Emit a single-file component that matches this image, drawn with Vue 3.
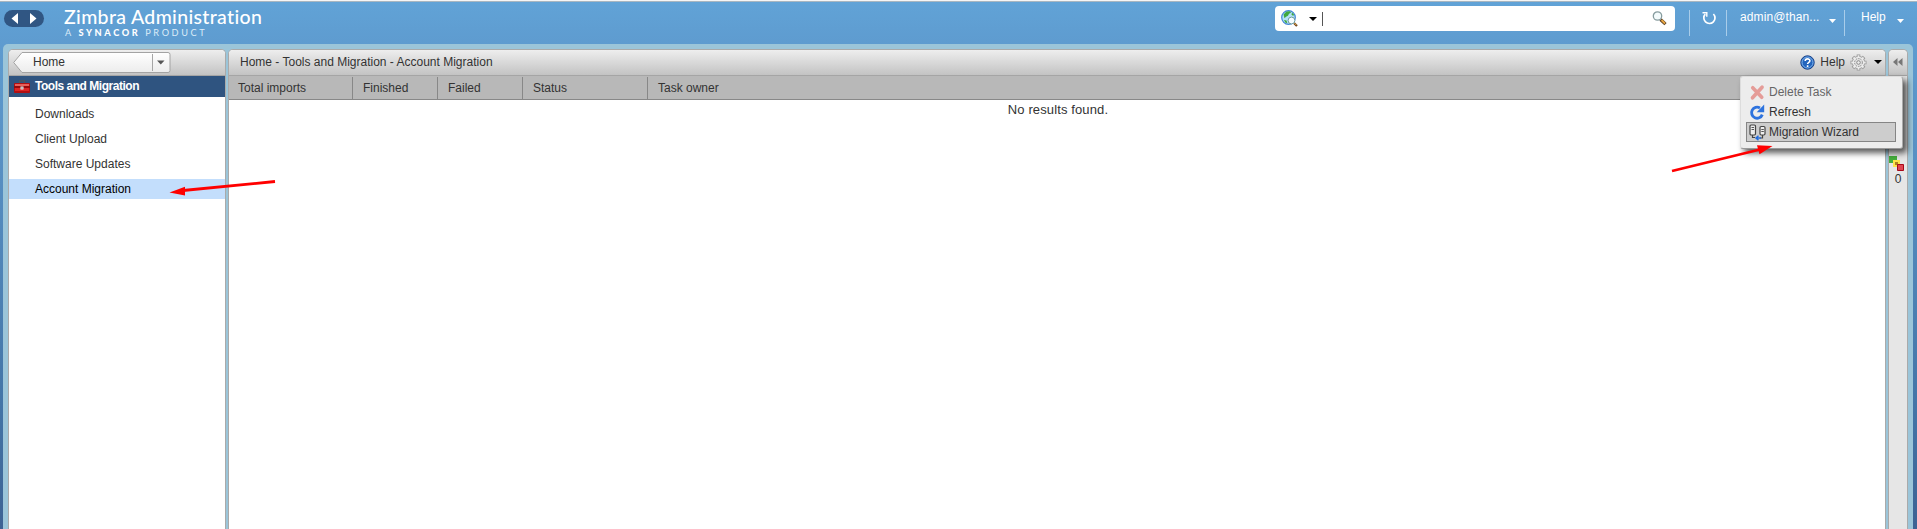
<script setup>
import { ref } from 'vue'

const navItems = ['Downloads', 'Client Upload', 'Software Updates', 'Account Migration']
const selected = ref('Account Migration')
const columns = [
  { label: 'Total imports', width: 124 },
  { label: 'Finished', width: 85 },
  { label: 'Failed', width: 85 },
  { label: 'Status', width: 125 },
  { label: 'Task owner', width: 0 },
]
</script>

<template>
  <div class="page">
    <header class="top">
      <div class="history">
        <svg width="40" height="17" viewBox="0 0 40 17">
          <path d="M14 3v11L7.500 8.500zM26 3v11l6.500-5.500z" fill="#fff" />
        </svg>
      </div>
      <div class="brand">
        <div class="name">Zimbra Administration</div>
        <div class="tag">A <b>SYNACOR</b> PRODUCT</div>
      </div>
      <div class="search">
        <svg class="globe" width="17" height="17" viewBox="0 0 17 17">
          <circle cx="7.500" cy="7.500" r="6.800" fill="#b4e1f6" stroke="#4386d6" stroke-width="1.200" />
          <path d="M2.500 4.500l3-3 3.500-.3 1 1.600-2 1-1 2-2 1-1.500 1.500zM11 2.500l2.300 2.500-1.300.8-1.500-1zM3 10l2.500.5.8 2.800-2-.8z" fill="#3fa83d" />
          <path d="M13 13l3 3" stroke="#6b431c" stroke-width="2.200" />
          <path d="M13.500 13.200l2 2" stroke="#f5b451" stroke-width="1" />
          <circle cx="10.500" cy="10.500" r="3.400" fill="#f7fdff" stroke="#5f9296" stroke-width=".9" />
        </svg>
        <svg class="caret" width="8" height="4" viewBox="0 0 8 4"><path d="M0 0h8L4 4z" fill="#000" /></svg>
        <i class="cursor"></i>
        <svg class="lens" width="15" height="15" viewBox="0 0 15 15">
          <path d="M8.500 8.500l5 4.700" stroke="#5a4027" stroke-width="3.200" />
          <path d="M9.500 9l3.500 3.500" stroke="#e8a642" stroke-width="1.800" />
          <circle cx="5.500" cy="5" r="4.200" fill="#f4fbfc" stroke="#879c9f" stroke-width="1.300" />
        </svg>
      </div>
      <div class="sep s1"></div>
      <svg class="reload" width="15" height="15" viewBox="0 0 15 15">
        <path d="M3.300 3.100A5.600 5.600 0 1 0 11.400 3" fill="none" stroke="#fff" stroke-width="1.700" />
        <path d="M.5 1.800h4.300v4" fill="none" stroke="#fff" stroke-width="1.400" />
      </svg>
      <div class="sep s2"></div>
      <span class="user">admin@than...</span>
      <svg class="tri" width="7" height="4" viewBox="0 0 7 4"><path d="M0 0h7L3.500 4z" fill="#fff" /></svg>
      <div class="sep s3"></div>
      <span class="tophelp">Help</span>
      <svg class="tri" width="7" height="4" viewBox="0 0 7 4"><path d="M0 0h7L3.500 4z" fill="#fff" /></svg>
    </header>

    <div class="shell">
      <aside class="panel side">
        <div class="bar">
          <div class="crumb">
            <svg width="158" height="21" viewBox="0 0 158 21">
              <defs>
                <linearGradient id="crumbFill" x1="0" y1="0" x2="0" y2="1">
                  <stop offset="0" stop-color="#fff" /><stop offset="1" stop-color="#ececec" />
                </linearGradient>
              </defs>
              <path d="M9 .5h146a2 2 0 0 1 2 2v16a2 2 0 0 1-2 2H9L.7 10.500z" fill="url(#crumbFill)" stroke="#a3a3a3" />
              <path d="M139.500 2v17" stroke="#a5a5a5" />
              <path d="M144 8.500h7.500l-3.750 4z" fill="#555" />
            </svg>
            <span>Home</span>
          </div>
        </div>
        <div class="section">
          <svg width="16" height="13" viewBox="0 0 16 13">
            <path d="M5.500 3V.8h5V3" fill="none" stroke="#555" stroke-width="1.300" />
            <rect y="3" width="16" height="10" rx="1" fill="#b30f12" />
            <path d="M1 4h14v2H1z" fill="#e8605a" />
            <path d="M1 8h14v3H1z" fill="#dc2524" />
            <path d="M0 7h16" stroke="#770608" />
            <rect x="6.500" y="6.500" width="3" height="3" fill="#eee" />
            <rect x="7.500" y="7.500" width="1" height="1" fill="#444" />
          </svg>
          <span>Tools and Migration</span>
        </div>
        <nav>
          <div
            v-for="item in navItems"
            :key="item"
            class="item"
            :class="{ on: item === selected }"
            @click="selected = item"
          >{{ item }}</div>
        </nav>
      </aside>

      <main class="panel content">
        <div class="bar mainbar">
          <span class="path">Home - Tools and Migration - Account Migration</span>
          <svg class="q" width="15" height="15" viewBox="0 0 15 15">
            <circle cx="7.500" cy="7.500" r="6.700" fill="#2465bd" stroke="#173f86" />
            <circle cx="7.500" cy="7.500" r="5.500" fill="none" stroke="#80b5ed" />
            <path d="M5.200 6.100c0-3 4.700-2.800 4.700-.3 0 1.600-2.300 1.600-2.300 3.300M7.600 10.200v1.700" fill="none" stroke="#fff" stroke-width="1.600" />
          </svg>
          <span class="helptext">Help</span>
          <svg class="gear" width="17" height="17" viewBox="0 0 17 17">
            <g stroke="#999" stroke-width="3.600">
              <path d="M8.500.5v16M.5 8.500h16M2.900 2.900l11.200 11.200M14.100 2.900L2.900 14.100" />
            </g>
            <circle cx="8.500" cy="8.500" r="6.200" fill="#e9e9e9" stroke="#999" stroke-width=".9" />
            <g stroke="#ececec" stroke-width="1.800">
              <path d="M8.500 1.300v14.400M1.300 8.500h14.400M3.500 3.500l10 10M13.500 3.500l-10 10" />
            </g>
            <circle cx="8.500" cy="8.500" r="3.900" fill="#e4e4e4" stroke="#888" stroke-dasharray="1.500 1" />
            <circle cx="8.500" cy="8.500" r="1.800" fill="#ededed" stroke="#888" />
          </svg>
          <svg class="drop" width="8" height="4" viewBox="0 0 8 4"><path d="M0 0h8L4 4z" fill="#000" /></svg>
        </div>
        <div class="thead">
          <div
            v-for="c in columns"
            :key="c.label"
            class="th"
            :style="c.width ? { width: c.width + 'px' } : { flex: 1 }"
          >{{ c.label }}</div>
        </div>
        <div class="empty">No results found.</div>
      </main>

      <aside class="panel strip">
        <div class="bar collapse">
          <svg width="10" height="8" viewBox="0 0 10 8"><path d="M4.500 0v8L0 4zM9.500 0v8L5 4z" fill="#777" /></svg>
        </div>
        <div class="status">
          <svg width="16" height="16" viewBox="0 0 16 16">
            <path d="M0 0h8v7H0z" fill="#45ae3d" />
            <path d="M5 5h5v5H5z" fill="#ad8120" stroke="#ffe34b" stroke-width="2" />
            <path d="M8.500 8.500h6v6h-6z" fill="#df4552" stroke="#a80718" />
          </svg>
          <span>0</span>
        </div>
      </aside>
    </div>

    <div class="menu">
      <div class="mi off">
        <svg width="16" height="16" viewBox="0 0 16 16">
          <path d="M3.500 3.500l8.500 9M12.300 3l-9 10" stroke="#e59c98" stroke-width="3.400" stroke-linecap="round" />
        </svg>
        <span>Delete Task</span>
      </div>
      <div class="mi">
        <svg width="16" height="16" viewBox="0 0 16 16">
          <path d="M12.500 10A5.200 5.200 0 1 1 10.300 3.700" fill="none" stroke="#2d73de" stroke-width="2.700" />
          <path d="M14.300.5v7.200H7.200z" fill="#2d73de" />
        </svg>
        <span>Refresh</span>
      </div>
      <div class="mi hot">
        <svg width="17" height="17" viewBox="0 0 17 17">
          <rect x="1" y="1" width="5.500" height="10" rx="1.200" fill="#eee" stroke="#444" stroke-width="1.200" />
          <rect x="11" y="2.500" width="5" height="8.500" rx="1.200" fill="#eee" stroke="#444" stroke-width="1.200" />
          <path d="M2.500 3.500h2.500M2.500 5.500h2.500M12.300 5.500h2.500M12.300 7.500h2.500" stroke="#555" />
          <path d="M3.500 11v2.500H6M13.500 11v3H11" fill="none" stroke="#444" stroke-width="1.200" />
          <path d="M7 14h5M9.500 11.800L7 14l2.500 2.200" fill="none" stroke="#246ddc" stroke-width="1.500" />
        </svg>
        <span>Migration Wizard</span>
      </div>
    </div>

    <svg class="marks" width="1917" height="529" viewBox="0 0 1917 529">
      <path d="M275 181.500L183 190.500" stroke="#f00" stroke-width="2.800" />
      <path d="M169.500 192.500L185 186.800v8.700z" fill="#f00" />
      <path d="M1672 171L1760 149.500" stroke="#f00" stroke-width="2.800" />
      <path d="M1772.500 146L1757 145.200l2.500 9z" fill="#f00" />
    </svg>
  </div>
</template>

<style>
body { margin: 0; overflow: hidden; }
</style>

<style scoped>
.page {
  position: relative;
  box-sizing: border-box;
  width: 1917px;
  height: 529px;
  overflow: hidden;
  display: flex;
  flex-direction: column;
  border-top: 1px solid #f5f5f5;
  background: linear-gradient(#61a3d7 0, #5e9bcf 45px, #578fc2 170px, #4374a6 410px, #3d6293 528px);
  font: 12px/16px "Liberation Sans", Arial, sans-serif;
  color: #333;
}
.page * { box-sizing: border-box; }
svg { display: block; flex: none; }
.top {
  height: 43px;
  flex: none;
  border-top: 1px solid #a8b6c0;
  display: flex;
  align-items: flex-start;
  color: #fff;
  white-space: nowrap;
}
.history { margin: 8px 0 0 4px; width: 40px; height: 17px; border-radius: 9px; background: #305683; }
.brand { margin: 3px 0 0 20px; width: 1211px; font-family: Lato, sans-serif; }
.name { font-size: 19.500px; line-height: 23px; font-weight: 500; letter-spacing: 0.340px; }
.tag { margin: 0 0 0 1px; font-size: 9.200px; line-height: 10px; letter-spacing: 2.600px; color: #dcecf8; }
.tag b { color: #fff; font-weight: 900; }
.search {
  margin-top: 4px;
  width: 400px;
  height: 25px;
  border-radius: 4px;
  background: #fff;
  display: flex;
  align-items: center;
}
.globe { margin-left: 6px; }
.caret { margin-left: 11px; }
.cursor { width: 1px; height: 14px; background: #555; margin-left: 5px; }
.lens { margin-left: auto; margin-right: 8px; }
.sep { width: 1px; height: 26px; margin-top: 8px; background: #a9cdea; }
.s1 { margin-left: 14px; }
.reload { margin: 9px 0 0 12px; }
.s2 { margin-left: 9px; }
.user { margin: 7px 0 0 13px; width: 89px; letter-spacing: 0.100px; }
.tri { margin-top: 17px; }
.s3 { margin-left: 8px; }
.tophelp { margin: 7px 0 0 16px; width: 36px; }

.shell {
  flex: 1;
  margin: 0 4px 0 3px;
  padding: 5px 5px 0;
  border-radius: 5px 5px 0 0;
  background: #9bc5d9;
  display: flex;
  gap: 2px;
}
.panel { border: 1px solid #aaa; border-bottom: 0; border-radius: 5px 5px 0 0; background: #fff; overflow: hidden; }
.bar {
  height: 26px;
  border-bottom: 1px solid #a5a5a5;
  background: linear-gradient(#eee, #c3c3c3);
  display: flex;
  align-items: center;
}
.side { width: 218px; }
.crumb { position: relative; margin-left: 4px; }
.crumb span { position: absolute; left: 20px; top: 2px; }
.section { height: 21px; display: flex; align-items: center; padding-left: 5px; gap: 5px; background: #2f5480; color: #fff; font-weight: bold; }
.section span { letter-spacing: -0.480px; line-height: 20px; margin-top: -1px; }
nav { padding-top: 7px; display: flex; flex-direction: column; gap: 5px; }
.item { height: 20px; line-height: 21px; padding-left: 26px; }
.item.on { background: #c3defc; color: #000; }

.content { flex: 1; }
.mainbar { padding-bottom: 1px; }
.path { margin-left: 11px; }
.q { margin-left: auto; }
.helptext { margin-left: 5px; }
.gear { margin-left: 5px; }
.drop { margin: 0 3px 0 7px; }
.thead { height: 24px; padding-top: 1px; background: #b8b8b8; border-bottom: 1px solid #888; display: flex; }
.th { padding-left: 10px; line-height: 22px; border-right: 1px solid #888; }
.th:first-child { padding-left: 9px; }
.th:last-child { border-right: 0; }
.empty { text-align: center; font-size: 13px; line-height: 20px; padding-left: 2px; letter-spacing: 0.120px; }

.strip { width: 20px; background: #e6e6e6; }
.collapse { justify-content: center; padding-bottom: 1px; }
.status { padding-top: 80px; display: flex; flex-direction: column; align-items: center; }
.status svg { margin-left: -2px; }
.status span { margin-top: -1px; }

.menu {
  position: absolute;
  left: 1740px;
  top: 75px;
  width: 163px;
  height: 73px;
  padding: 5px 6px 7px;
  border: 1px solid #ddd;
  border-bottom-color: #999;
  border-right-color: #aaa;
  border-radius: 3px;
  background: #ededed;
  box-shadow: 4px 4px 6px rgba(0, 0, 0, 0.65);
}
.mi { height: 20px; display: flex; align-items: center; padding-left: 2px; white-space: nowrap; }
.mi svg { width: 17px; height: 17px; }
.mi span { margin-left: 3px; }
.mi.off { color: #666; }
.mi.hot { margin: 0 0 0 -1px; border: 1px solid #858585; background: #cdcdcd; }
.marks { position: absolute; left: 0; top: -1px; pointer-events: none; }
</style>
